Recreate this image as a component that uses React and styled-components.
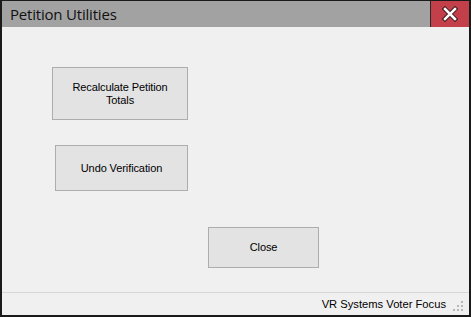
import React from 'react';
import styled, { createGlobalStyle } from 'styled-components';

const Global = createGlobalStyle`
  html, body {
    margin: 0;
    padding: 0;
    background: #f0f0f0;
  }
`;

/* ── Window frame ─────────────────────────────────────────────────────── */

const Window = styled.div`
  width: 471px;
  height: 317px;
  box-sizing: border-box;
  border-top: 1px solid #1a1a1a;
  border-left: 2px solid #1a1a1a;
  border-right: 2px solid #1a1a1a;
  border-bottom: 2px solid #1a1a1a;
  background: #f0f0f0;
  display: flex;
  flex-direction: column;
  font-family: 'Liberation Sans', Arial, sans-serif;
`;

const TitleBar = styled.div`
  height: 26px;
  flex-shrink: 0;
  background: #a2a2a2;
  display: flex;
  align-items: center;
  justify-content: space-between;
`;

const Title = styled.span`
  padding-left: 8px;
  font-family: 'Open Sans', 'Liberation Sans', sans-serif;
  font-size: 15px;
  color: #111;
  letter-spacing: -0.2px;
`;

const CloseX = styled.div`
  width: 38px;
  height: 100%;
  background: #c3404a;
  border-left: 1px solid #2a2a2a;
  display: flex;
  align-items: center;
  justify-content: center;
`;

/* ── Content ──────────────────────────────────────────────────────────── */

const Body = styled.div`
  flex: 1;
  display: flex;
  flex-direction: column;
  align-items: flex-start;
`;

const Button = styled.button`
  box-sizing: border-box;
  width: ${({ w }) => w}px;
  height: ${({ h }) => h}px;
  margin-top: ${({ top }) => top}px;
  margin-left: ${({ left }) => left}px;
  padding: 0 8px;
  background: #e3e3e3;
  border: 1px solid #adadad;
  border-radius: 0;
  font-family: 'Liberation Sans', Arial, sans-serif;
  font-size: 11px;
  line-height: 13px;
  letter-spacing: -0.1px;
  color: #000;
  text-align: center;
`;

/* ── Status bar ───────────────────────────────────────────────────────── */

const StatusBar = styled.div`
  height: 22px;
  flex-shrink: 0;
  border-top: 1px solid #d7d7d7;
  display: flex;
  align-items: center;
  justify-content: flex-end;
  padding-right: 4px;
  gap: 7px;
`;

const StatusText = styled.span`
  font-family: 'Liberation Sans', Arial, sans-serif;
  font-size: 11.2px;
  color: #000;
`;

const Grip = () => (
  <svg width="12" height="12" viewBox="0 0 12 12" style={{ marginTop: 6 }}>
    {[[8, 0], [4, 4], [8, 4], [0, 8], [4, 8], [8, 8]].map(([x, y]) => (
      <rect key={`${x}-${y}`} x={x} y={y} width="2" height="2" fill="#b8b8b8" />
    ))}
  </svg>
);

const XIcon = () => (
  <svg width="16" height="16" viewBox="0 0 16 16">
    <path d="M3 3 L13 13 M13 3 L3 13" stroke="#3a1a1c" strokeWidth="4.5" strokeLinecap="square" />
    <path d="M3 3 L13 13 M13 3 L3 13" stroke="#fff" strokeWidth="2.5" strokeLinecap="square" />
  </svg>
);

export default function App() {
  return (
    <>
      <Global />
      <Window>
        <TitleBar>
          <Title>Petition Utilities</Title>
          <CloseX><XIcon /></CloseX>
        </TitleBar>

        <Body>
          <Button w={136} h={53} top={40} left={50}>
            Recalculate Petition<br />Totals
          </Button>
          <Button w={133} h={46} top={25} left={53}>
            Undo Verification
          </Button>
          <Button w={111} h={41} top={36} left={206}>
            Close
          </Button>
        </Body>

        <StatusBar>
          <StatusText>VR Systems Voter Focus</StatusText>
          <Grip />
        </StatusBar>
      </Window>
    </>
  );
}
